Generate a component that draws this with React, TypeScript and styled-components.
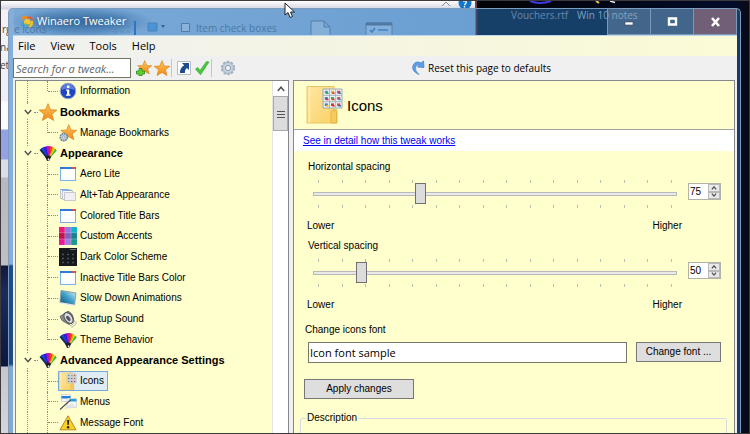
import React, { useState } from "react";
import styled, { createGlobalStyle, css } from "styled-components";

const cream = "#fffecd";
const ui = '"Open Sans", "Noto Sans", sans-serif';
const classic = '"Liberation Sans", Arial, sans-serif';

const GlobalStyle = createGlobalStyle`
  * { box-sizing: border-box; }
  body { margin: 0; background: #020a20; color: #000; font: 10px/14px ${classic}; }
  button, input { font: inherit; color: inherit; }
  button { padding: 0; border: 0; background: none; }
  ul { margin: 0; padding: 0; list-style: none; }
  svg { display: block; flex: none; }
`;

const Screen = styled.div`
  position: relative;
  height: 100vh;
  border: 1px solid #3c3a3c;
  padding: 7px 8px 0 7px;
  overflow: hidden;
`;

/* ---------- desktop behind the window ---------- */
const Desktop = styled.div`
  position: absolute;
  inset: 0;
  display: flex;
  background: linear-gradient(90deg, #020307 65%, #020b29 98%, #0a0a12);
`;
const Explorer = styled.div`
  width: 476px;
  border-right: 2px solid #6e4450;
  background: linear-gradient(#fff 0, #d4d4e2 8px, #f2f2f8 9px, #eeeef6 100px, #fafaff 101px,
    #fafaff 128px, #92a2e4 129px, #92a2e4 158px, #dcdce6 159px, #dcdce6 176px,
    #b7b7bd 177px, #c0c0c4 264px, #10193c 265px, #1c2b5c 290px, #0b1740 365px, #c6c6ca 366px, #d5d5dd);
`;
const Ghost = styled.span<{ $x: number; $y: number; $tone?: string }>`
  position: absolute;
  left: ${(p) => p.$x}px;
  top: ${(p) => p.$y}px;
  color: ${(p) => p.$tone || "#45474f"};
  font: 10px/14px ${ui};
  white-space: nowrap;
`;
const DesktopArt = styled.svg`
  position: absolute;
  left: 430px;
  top: 0;
`;

/* ---------- window ---------- */
const Window = styled.div`
  position: relative;
  display: flex;
  flex-direction: column;
  height: 100%;
  padding: 0 3px 0 4px;
  border: 1px solid #7d9cbb;
  border-bottom: 0;
  border-radius: 5px 5px 0 0;
  overflow: hidden;
  background:
    linear-gradient(#86aedb 0, #86aedb 255px, #1d4f88 257px, #1d4a80 355px, #84a9cf 358px) 0 0 / 5px 100% no-repeat,
    linear-gradient(90deg, #7ba9d6, #6b9fd2 466px, #5b4a66 467px, #174069 469px, #143c66);
`;
const TitleBar = styled.header`
  position: relative;
  display: flex;
  align-items: center;
  flex: none;
  height: 27px;
  padding-left: 7px;
  border-bottom: 1px solid #bcd6ee;
  background: radial-gradient(ellipse 72px 16px at 68px 13px, #2f659cd0, #3f75ab90 60%, transparent);
`;
const TitleArt = styled.svg`
  position: absolute;
  left: 0;
  top: 0;
`;
const Title = styled.h1`
  position: relative;
  flex: 1;
  margin: 0 0 2px 3px;
  color: #fff;
  font: 11px/14px ${ui};
  text-shadow: 0 0 5px #1d4a78;
`;
const Caption = styled.button<{ $close?: boolean }>`
  position: relative;
  display: grid;
  place-items: center;
  width: 44px;
  height: 26px;
  border: 1px solid #7d99b4;
  border-top: 0;
  margin-left: -1px;
  background: ${(p) => (p.$close ? "#715f77" : "#86a4c466")};
`;
const Client = styled.div`
  display: flex;
  flex-direction: column;
  flex: 1;
  min-height: 0;
  background: #f0f0f0;
`;
const MenuBar = styled.nav`
  display: flex;
  gap: 15px;
  flex: none;
  height: 20px;
  padding-left: 5px;
  background: linear-gradient(90deg, #f0f0f0, #f5f5e2 50%, #fbfbd6);
`;
const MenuItem = styled.button`
  font: 11px/20px ${ui};
`;
const Toolbar = styled.div`
  display: flex;
  align-items: center;
  flex: none;
  height: 24px;
`;
const Search = styled.input`
  width: 118px;
  height: 20px;
  padding: 0 2px;
  margin-right: 4px;
  border: 1px solid #6f7760;
  outline: 0;
  background: #fff;
  font: italic 11px/16px ${ui};
  &::placeholder { color: #666; opacity: 1; }
`;
const Tool = styled.button`
  display: grid;
  place-items: center;
  width: 18px;
  height: 20px;
`;
const Separator = styled.span<{ $gap: number }>`
  width: 1px;
  height: 18px;
  margin-right: ${(p) => p.$gap}px;
  background: #c4c4c4;
`;
const Reset = styled.button`
  display: flex;
  align-items: center;
  gap: 3px;
  margin: 0 auto;
  padding-right: 12px;
  font: 10px/20px ${ui};
`;
const Body = styled.div`
  display: flex;
  gap: 4px;
  flex: 1;
  min-height: 0;
  padding: 0 2px;
  background: #f0f0f0;
`;

/* ---------- tree ---------- */
const TreePanel = styled.aside`
  display: flex;
  flex: 0 0 274px;
  border: 1px solid #85878c;
  border-width: 1px 1px 0 1px;
  background: ${cream};
`;
const Tree = styled.ul`
  display: flex;
  flex-direction: column;
  flex: 1;
  min-width: 0;
`;
const Row = styled.li`
  display: flex;
  align-items: center;
  flex: 1 0 20px;
  overflow: hidden;
`;
const Guide = styled.span<{ $width: number; $half?: boolean }>`
  width: ${(p) => p.$width}px;
  height: ${(p) => (p.$half ? "50%" : "100%")};
  align-self: flex-start;
  border-right: 1px dotted #8c8c7c;
`;
const Branch = styled.span<{ $width: number }>`
  width: ${(p) => p.$width}px;
  border-top: 1px dotted #8c8c7c;
`;
const Toggle = styled.button`
  display: grid;
  place-items: center;
  width: 13px;
  height: 14px;
  margin-left: -7px;
  background: ${cream};
`;
const Node = styled.button<{ $group?: boolean; $selected?: boolean }>`
  display: flex;
  align-items: center;
  gap: 3px;
  height: 20px;
  padding-right: 3px;
  border: 1px solid transparent;
  white-space: nowrap;
  ${(p) => p.$group && css`font: bold 11px/14px ${classic};`}
  ${(p) => p.$selected && css`border-color: #7aa7da; background: #dfecf3;`}
`;
const Scrollbar = styled.div`
  width: 16px;
  border-left: 1px solid #e4e4e4;
  background: #fff;
`;
const ScrollUp = styled.button`
  display: grid;
  place-items: center;
  width: 100%;
  height: 15px;
`;
const ScrollThumb = styled.div`
  display: grid;
  place-items: center;
  height: 35px;
  border: 1px solid #a9a9a9;
  background: #dcdcdc;
`;

/* ---------- page ---------- */
const Page = styled.main`
  flex: 1;
  min-width: 0;
  border: 1px solid #85878c;
  border-bottom: 0;
  background: ${cream};
  overflow: hidden;
`;
const PageHead = styled.div`
  display: flex;
  align-items: center;
  gap: 4px;
  height: 49px;
  padding-left: 12px;
  border-bottom: 1px solid #a2a2a2;
`;
const PageTitle = styled.h2`
  margin: 2px 0 0;
  font: 15px/20px ${classic};
`;
const LinkBar = styled.div`
  height: 21px;
  padding: 4px 9px 0;
  background: #fff;
`;
const Link = styled.a`
  color: #0000f0;
`;
const Settings = styled.form`
  padding: 9px 13px 0 13px;
`;
const SliderField = styled.div`
  display: grid;
  grid-template-columns: minmax(0, 1fr) 33px;
  column-gap: 6px;
  height: 79px;
  align-content: start;
`;
const SliderLabel = styled.label`
  grid-column: 1 / -1;
  padding-left: 1px;
`;
const SliderBox = styled.div`
  padding: 6px 5px 11px 6px;
`;
const Ticks = styled.div`
  display: flex;
  justify-content: space-between;
  height: 3px;
  padding: 0 5px;
`;
const Tick = styled.span`
  width: 1px;
  background: #bdbdac;
`;
const Range = styled.input`
  display: block;
  width: 100%;
  height: 22px;
  margin: 0;
  appearance: none;
  background: none;
  &::-webkit-slider-runnable-track {
    height: 4px;
    border: 1px solid #b9b9b9;
    background: #e9e9ea;
  }
  &::-webkit-slider-thumb {
    appearance: none;
    width: 11px;
    height: 21px;
    margin-top: -10px;
    border: 1px solid #707070;
    background: #dcdcdc;
  }
`;
const Ends = styled.div`
  display: flex;
  justify-content: space-between;
`;
const Spinner = styled.div`
  display: grid;
  grid-template: 1fr 1fr / 1fr 12px;
  height: 17px;
  margin-top: 9px;
  border: 1px solid #b2b2a8;
  background: #fff;
`;
const SpinValue = styled.input`
  grid-row: 1 / -1;
  width: 100%;
  min-width: 0;
  padding: 0 1px;
  border: 0;
  outline: 0;
  background: none;
`;
const SpinButton = styled.button`
  display: grid;
  place-items: center;
  border: 1px solid #b9b9b9;
  background: #e9e9e9;
`;
const FontLabel = styled.label`
  display: block;
  margin: 5px 0 5px -2px;
`;
const FontRow = styled.div`
  display: flex;
  gap: 9px;
  padding-left: 1px;
`;
const Sample = styled.input`
  flex: 1;
  min-width: 0;
  height: 21px;
  padding: 0 1px;
  border: 1px solid #77776c;
  outline: 0;
  background: #fff;
  font: 11px/18px ${ui};
`;
const PushButton = styled.button<{ $width: number }>`
  width: ${(p) => p.$width}px;
  height: 20px;
  border: 1px solid #777;
  background: #dedede;
`;
const ApplyRow = styled.div`
  margin: 16px 0 12px -3px;
`;
const Description = styled.fieldset`
  height: 40px;
  margin: 0 -6px 0 -7px;
  padding: 0 5px;
  border: 1px solid #d6dbe6;
  border-radius: 2px;
`;
const Legend = styled.legend`
  padding: 0 1px;
`;

/* ---------- icons ---------- */
const STAR = "M8 .6 10.2 6 15.8 6.3 11.4 9.9 13 15.5 8 12.4 3 15.5 4.6 9.9 .2 6.3 5.8 6Z";

const Star = ({ size = 16, badge }: { size?: number; badge?: "plus" | "gear" }) => (
  <svg width={size} height={size} viewBox="0 0 16 16">
    <defs>
      <linearGradient id="star" x1="0" y1="0" x2="0" y2="1">
        <stop offset="0" stopColor="#ffc65a" />
        <stop offset="1" stopColor="#f08a16" />
      </linearGradient>
    </defs>
    <path d={STAR} fill="url(#star)" stroke="#d98420" strokeWidth=".7" transform={badge ? "translate(1.5 0) scale(.9)" : undefined} />
    {badge === "plus" && <path d="M3 8.5h3v2.5h2.5v3H6v2H3v-2H.5v-3H3Z" fill="#5fd02f" stroke="#238a1c" strokeWidth=".8" />}
    {badge === "gear" && (
      <g>
        <circle cx="4.3" cy="11.7" r="3.2" fill="#c5d3dc" stroke="#71899c" strokeWidth="1.5" strokeDasharray="1.6 .5" />
        <circle cx="4.3" cy="11.7" r="1.1" fill="#fff" stroke="#71899c" strokeWidth=".6" />
      </g>
    )}
  </svg>
);

const InfoIcon = () => (
  <svg width="18" height="18" viewBox="0 0 18 18">
    <circle cx="9" cy="9" r="7.8" fill="#1f45bd" stroke="#9aa9cc" strokeWidth="1" />
    <path d="M2.5 8a6.5 6.5 0 0 1 13 0q-6.5-3-13 0Z" fill="#7695e6" opacity=".7" />
    <circle cx="9.2" cy="4.9" r="1.4" fill="#fff" />
    <path d="M7 7.6h3.3v5h1.2v1.2H6.9v-1.2H8V8.8H7Z" fill="#fff" />
  </svg>
);

const FanIcon = () => (
  <svg width="18" height="18" viewBox="0 0 18 18">
    <path d="M.5 6 3.500 3.500 10 15.500 7 14Z" fill="#0e2f50" />
    <path d="M2 4.500 5.500 2.800 10 15.500Z" fill="#1746d8" />
    <path d="M4.500 3.200 8 2.200 10 15.500Z" fill="#3a14d8" />
    <path d="M7.200 2.300 10 2 10 15.500Z" fill="#a814d0" />
    <path d="M9.500 2 12 2.300 10 15.500Z" fill="#ea1270" />
    <path d="M11.500 2.200 14 3 10 15.500Z" fill="#f23a12" />
    <path d="M13.500 2.900 15.500 4 10 15.500Z" fill="#fa9a00" />
    <path d="M15 3.700 16.700 5 10 15.500Z" fill="#e8e000" />
    <path d="M16.200 4.700 17.700 6.300 10 15.500Z" fill="#26b53a" />
    <path d="M6 12.200 9 11l3.200 1.500-1.700 4-2.500.5Z" fill="#22202c" />
    <path d="M8.500 15.500 9.600 14l1 1.200-.8 1.300Z" fill="#e6e6e6" />
  </svg>
);

const WindowIcon = () => (
  <svg width="18" height="18" viewBox="0 0 18 18">
    <rect x="1.5" y="2.5" width="15" height="13" fill="#fff" stroke="#7daee8" />
    <path d="M1 2h16v2H1Z" fill="#2c79df" />
    <path d="M13 2h3.5v1.8H13Z" fill="#e0523b" />
  </svg>
);
const AltTabIcon = () => (
  <svg width="18" height="18" viewBox="0 0 18 18">
    <path d="M1.5 3.5h10v9h-10Z" fill="#eef2f6" stroke="#b9c5d0" />
    <path d="M3.5 4.5h10v9h-10Z" fill="#f7f7f7" stroke="#c6c6c6" />
    <path d="M5.5 6.5h11v8h-11Z" fill="#f0f0f2" stroke="#c6cad0" />
    <path d="M1 3.5h8M3 4.5h10" stroke="#7fb0e0" />
  </svg>
);
const ACCENTS = ["#f1177b", "#8f7be0", "#0cb4c4", "#c4104e", "#7a64c2", "#12868a", "#e8179c", "#9a7de0", "#159d86"];
const AccentsIcon = () => (
  <svg width="18" height="18" viewBox="0 0 18 18">
    <path d="M0 0h18v18H0Z" fill="#c9c2e0" />
    {ACCENTS.map((color, i) => (
      <rect key={i} x={(i % 3) * 6.1} y={Math.floor(i / 3) * 6.1} width="5.7" height="5.7" fill={color} />
    ))}
  </svg>
);
const DarkIcon = () => (
  <svg width="18" height="18" viewBox="0 0 18 18">
    <path d="M0 0h18v18H0Z" fill="#16181b" />
    <path d="M11 1.5h6" stroke="#777" />
    <path d="M3 6.5h12M3 10.5h12M3 14.5h12" stroke="#46505a" strokeWidth="1.5" strokeDasharray="2 3" />
  </svg>
);
const MonitorIcon = () => (
  <svg width="18" height="18" viewBox="0 0 18 18">
    <defs>
      <linearGradient id="glass" x1="0" y1="1" x2="1" y2="0">
        <stop offset="0" stopColor="#0e4d78" />
        <stop offset=".5" stopColor="#3da0c8" />
        <stop offset="1" stopColor="#d8f2f4" />
      </linearGradient>
    </defs>
    <path d="M2 1.5 17 4 15.5 16 1 13.5Z" fill="url(#glass)" stroke="#8597a2" strokeWidth=".9" />
    <path d="M1.2 13.8 15.5 16.4" stroke="#e5eaec" strokeWidth="1.2" />
  </svg>
);
const SpeakerIcon = () => (
  <svg width="18" height="18" viewBox="0 0 18 18">
    <path d="M1 6.5 9 1.2q6 2.5 5.5 10.5L10 14.5 3 10.5Z" fill="#8a8c90" stroke="#55585e" strokeWidth=".8" />
    <ellipse cx="9.5" cy="8" rx="3.8" ry="6" transform="rotate(-34 9.5 8)" fill="#dedfe2" stroke="#4d5056" />
    <ellipse cx="9.3" cy="8.4" rx="1.7" ry="3" transform="rotate(-34 9.3 8.4)" fill="#54575d" />
    <path d="M11 15.8q4.3-1 4.3-6M12.5 17.3q4.5-1.3 4.5-6" fill="none" stroke="#a3a6a8" strokeWidth=".9" />
  </svg>
);
const MINI = ["#3d9ad0", "#e2b02c", "#d03c2c", "#2f6ec4", "#3ba54e", "#cf4734", "#3480cc", "#d23a2e", "#d6452d"];
const FolderIcon = ({ large }: { large?: boolean }) => (
  <svg width={large ? 37 : 18} height={large ? 40 : 18} viewBox={large ? "0 0 37 40" : "0 0 38 38"}>
    <defs>
      <linearGradient id="folder" x1="0" y1="0" x2="1" y2="1">
        <stop offset="0" stopColor="#ffe7a2" />
        <stop offset="1" stopColor="#fbd064" />
      </linearGradient>
    </defs>
    <path d="M1 1.5h27v23h3V38H1Z" fill="url(#folder)" stroke="#e9c462" />
    <path d="M3.5 2v35.5" stroke="#fff0bd" strokeWidth="1.5" />
    <path d="M25 38V28q1-3 3-3t2.5 2v11Z" fill="#f6cb5e" stroke="#e2b545" />
    <path d="M17 4h19v19H17Z" fill="#eef2f4" stroke="#9ca9b6" />
    <path d="M23.5 4v19M29.7 4v19M17 10.3h19M17 16.7h19" stroke="#9fabb8" strokeWidth=".9" />
    {MINI.map((color, i) => (
      <g key={i}>
        <rect x={18.8 + (i % 3) * 6.2} y={5.8 + Math.floor(i / 3) * 6.3} width="3" height="2.6" fill={color} />
        <rect x={20 + (i % 3) * 6.2} y={7.4 + Math.floor(i / 3) * 6.3} width="2.5" height="1.6" fill={MINI[(i + 4) % 9]} />
      </g>
    ))}
  </svg>
);
const MenusIcon = () => (
  <svg width="18" height="18" viewBox="0 0 18 18">
    <path d="M2.500 1.500h9v7h-9Z" fill="#f4f6f8" stroke="#c2ccd4" strokeWidth=".7" />
    <path d="M2.500 3h9v2.500h-9Z" fill="#2581d5" />
    <path d="M8 5.500h9.500v9H8Z" fill="#f6f6f6" stroke="#c2ccd4" strokeWidth=".7" />
    <path d="M10.500 6h7v2.500h-7Z" fill="#2ba0d8" />
    <path d="M1 16.500 11.500 7" stroke="#4b5258" strokeWidth="1.200" />
    <path d="M4.500 16 12 10l4 2.500-3 2.500Z" fill="#dfe1e2" opacity=".8" />
  </svg>
);
const WarningIcon = () => (
  <svg width="18" height="18" viewBox="0 0 18 18">
    <path d="M9 1.8 17 15.8H1Z" fill="#fbd022" stroke="#b58d24" strokeLinejoin="round" />
    <path d="M8 6h2.2l-.5 5H8.5Z" fill="#222" />
    <circle cx="9.1" cy="13.2" r="1.2" fill="#222" />
  </svg>
);
const ShortcutIcon = () => (
  <svg width="16" height="16" viewBox="0 0 16 16">
    <path d="M1.5 1.5h13v13h-13Z" fill="#fff" stroke="#b9bdc4" />
    <path d="M6 3h7v7l-2.2-2.1Q8.5 9.7 8.8 13H4Q3.6 8.200 8.200 5.300Z" fill="#1d4d8e" />
  </svg>
);
const CheckIcon = () => (
  <svg width="16" height="16" viewBox="0 0 16 16">
    <path d="M1.500 9 3.800 7.500 6 10.500 12.500 1.500 15 2 6.500 14.800Z" fill="#4bc83c" stroke="#2fa52a" strokeWidth=".6" />
  </svg>
);
const GearIcon = () => (
  <svg width="16" height="16" viewBox="0 0 16 16">
    <circle cx="8" cy="8" r="6.300" fill="none" stroke="#9fb0be" strokeWidth="1.700" strokeDasharray="2.500 1.450" />
    <circle cx="8" cy="8" r="5.500" fill="#c6d2dc" stroke="#93a6b5" strokeWidth=".8" />
    <circle cx="8" cy="8" r="2.600" fill="#f0f0f0" stroke="#8b9fb0" />
  </svg>
);
const ResetIcon = () => (
  <svg width="14" height="16" viewBox="0 0 14 16">
    <path d="M8 14.500Q0 11 2 5.500 4.500 0 10 3L12.500 1 13 7.500 6.500 7 8.500 5Q5.500 4 4.500 7 3.500 11 8 14.500Z" fill="#5f9fe6" stroke="#3c7cc8" strokeWidth=".7" />
  </svg>
);
const LogoIcon = () => (
  <svg width="14" height="14" viewBox="0 0 14 14">
    <path d="M6.500 1Q.5 0 1 6 3 2.800 7.500 4Z" fill="#e88e22" />
    <path d="M7 2q6-2 6 4-1-3-4.500-2.500Z" fill="#ee5c24" />
    <path d="M13 6q1 7-6 7 4-2 3.500-7Z" fill="#f6c126" />
    <path d="M1 7q0 6 6 6-3-2-2.500-5Z" fill="#3e9fe0" />
    <circle cx="7.300" cy="7.300" r="3.200" fill="#f8c929" />
    <path d="M5 8.500q2 2.500 4.500.8" stroke="#58b26b" strokeWidth="1.300" fill="none" />
  </svg>
);
const Chevron = ({ up, small }: { up?: boolean; small?: boolean }) => (
  <svg width={small ? 6 : 8} height={small ? 4 : 6} viewBox="0 0 8 6">
    <path d={up ? "M.8 5 4 1.200 7.200 5" : "M.8 1 4 4.600 7.200 1"} fill="none" stroke="#4d4d4d" strokeWidth={small ? 1.8 : 1.400} />
  </svg>
);

/* ---------- data ---------- */
type Entry = { label: string; icon: React.ReactNode; group?: boolean; last?: boolean };
const entries: Entry[] = [
  { label: "Information", icon: <InfoIcon />, last: true },
  { label: "Bookmarks", icon: <Star size={18} />, group: true },
  { label: "Manage Bookmarks", icon: <Star size={18} badge="gear" />, last: true },
  { label: "Appearance", icon: <FanIcon />, group: true },
  { label: "Aero Lite", icon: <WindowIcon /> },
  { label: "Alt+Tab Appearance", icon: <AltTabIcon /> },
  { label: "Colored Title Bars", icon: <WindowIcon /> },
  { label: "Custom Accents", icon: <AccentsIcon /> },
  { label: "Dark Color Scheme", icon: <DarkIcon /> },
  { label: "Inactive Title Bars Color", icon: <WindowIcon /> },
  { label: "Slow Down Animations", icon: <MonitorIcon /> },
  { label: "Startup Sound", icon: <SpeakerIcon /> },
  { label: "Theme Behavior", icon: <FanIcon />, last: true },
  { label: "Advanced Appearance Settings", icon: <FanIcon />, group: true },
  { label: "Icons", icon: <FolderIcon /> },
  { label: "Menus", icon: <MenusIcon /> },
  { label: "Message Font", icon: <WarningIcon /> },
];
const MIN = 32;
const MAX = 182;
const marks = Array.from({ length: 16 }, (_, i) => i);

const TickRow = () => (
  <Ticks aria-hidden>{marks.map((i) => <Tick key={i} />)}</Ticks>
);

function Spacing({ id, label, initial }: { id: string; label: string; initial: number }) {
  const [value, setValue] = useState(initial);
  const change = (next: number) => setValue(Math.min(MAX, Math.max(MIN, next || MIN)));
  return (
    <SliderField>
      <SliderLabel htmlFor={id}>{label}</SliderLabel>
      <SliderBox>
        <TickRow />
        <Range id={id} type="range" min={MIN} max={MAX} value={value} onChange={(e) => change(+e.target.value)} />
        <TickRow />
      </SliderBox>
      <Spinner>
        <SpinValue aria-label={`${label} value`} value={value} onChange={(e) => change(+e.target.value)} />
        <SpinButton type="button" aria-label="Increase" onClick={() => change(value + 1)}><Chevron up small /></SpinButton>
        <SpinButton type="button" aria-label="Decrease" onClick={() => change(value - 1)}><Chevron small /></SpinButton>
      </Spinner>
      <Ends><span>Lower</span><span>Higher</span></Ends>
    </SliderField>
  );
}

export default function App() {
  const [selected, setSelected] = useState("Icons");
  return (
    <Screen>
      <GlobalStyle />
      <Desktop aria-hidden>
        <Explorer />
        <Ghost $x={1} $y={21}>rg</Ghost>
        <Ghost $x={-1} $y={39}>na</Ghost>
        <Ghost $x={-1} $y={57}>eta</Ghost>
        <DesktopArt width="200" height="10" viewBox="0 0 200 10">
          <path d="m11 5 4-4 4 4" fill="none" stroke="#888" />
          <circle cx="34" cy="2" r="6.500" fill="#1275c9" />
          <path d="M32 0q4-1 3 2l-1.500 2M33.500 5v1.500" stroke="#fff" strokeWidth="1.300" fill="none" />
          <path d="M99 0q10 4 21 0" stroke="#403ce8" strokeWidth="2" fill="none" />
          <path d="m165 0 3 2" stroke="#e9cf4d" strokeWidth="2" />
          <path d="m179 0 5 1.500" stroke="#eee" strokeWidth="1.500" />
        </DesktopArt>
      </Desktop>
      <Window>
        <TitleBar>
          <TitleArt aria-hidden width="500" height="26" viewBox="0 0 500 26">
            <path d="M122 12v14" stroke="#2f74c0" strokeWidth="2" />
            <path d="M101 13h16M101 18h16M101 23h16" stroke="#5c8bbb" strokeDasharray="4 2" />
            <path d="M135 14h9v8h-9Z" fill="#4c94d8" stroke="#4782ba" />
            <path d="m148 16 4 0-2 3Z" fill="#37618d" />
            <path d="M168.500 14.500h8v8h-8Z" fill="#8ab3dc" stroke="#4f7ca9" />
            <path d="M298 26V12h13l6 6v8M311 12v6h6M353 26V14h26v12" fill="#84afd9" stroke="#5580ad" />
            <path d="M353 15h26" stroke="#4f79a5" strokeWidth="3" />
            <path d="m357 21 2 2 3-4M365 21h10" fill="none" stroke="#3d83c4" strokeWidth="1.500" />
          </TitleArt>
          <Ghost aria-hidden $x={1} $y={13} $tone="#4b78a8">e icons</Ghost>
          <Ghost aria-hidden $x={183} $y={12} $tone="#4b78a5">Item check boxes</Ghost>
          <Ghost aria-hidden $x={498} $y={-1} $tone="#6689ad">Vouchers.rtf</Ghost>
          <Ghost aria-hidden $x={564} $y={-1} $tone="#7fa0c2">Win 10 notes</Ghost>
          <LogoIcon />
          <Title>Winaero Tweaker</Title>
          <Caption aria-label="Minimize">
            <svg width="10" height="10" viewBox="0 0 10 10"><path d="M1 5h8v3H1Z" fill="#fff" stroke="#3a4a5c" strokeWidth=".6" /></svg>
          </Caption>
          <Caption aria-label="Maximize">
            <svg width="11" height="9" viewBox="0 0 11 9"><path d="M2 1.500h7v6H2Z" fill="none" stroke="#fff" strokeWidth="2.400" /></svg>
          </Caption>
          <Caption aria-label="Close" $close>
            <svg width="11" height="10" viewBox="0 0 11 10"><path d="m2 1 7 8M9 1 2 9" stroke="#fff" strokeWidth="2.600" /></svg>
          </Caption>
        </TitleBar>
        <Client>
          <MenuBar aria-label="Main menu">
            {["File", "View", "Tools", "Help"].map((item) => <MenuItem key={item}>{item}</MenuItem>)}
          </MenuBar>
          <Toolbar>
            <Search aria-label="Search for a tweak" placeholder="Search for a tweak..." />
            <Tool aria-label="Add bookmark"><Star badge="plus" /></Tool>
            <Tool aria-label="Bookmarks"><Star /></Tool>
            <Separator $gap={3} />
            <Tool aria-label="Open shortcut"><ShortcutIcon /></Tool>
            <Tool aria-label="Apply"><CheckIcon /></Tool>
            <Separator $gap={7} />
            <Tool aria-label="Options"><GearIcon /></Tool>
            <Reset><ResetIcon />Reset this page to defaults</Reset>
          </Toolbar>
          <Body>
            <TreePanel>
              <Tree>
                {entries.map((entry) => (
                  <Row key={entry.label}>
                    <Guide $width={12} />
                    {entry.group ? (
                      <>
                        <Toggle aria-label={`Collapse ${entry.label}`}><Chevron /></Toggle>
                        <Branch $width={4} />
                      </>
                    ) : (
                      <>
                        <Guide $width={20} $half={entry.last} />
                        <Branch $width={10} />
                      </>
                    )}
                    <Node $group={entry.group} $selected={entry.label === selected} onClick={() => setSelected(entry.label)}>
                      {entry.icon}
                      {entry.label}
                    </Node>
                  </Row>
                ))}
              </Tree>
              <Scrollbar>
                <ScrollUp aria-label="Scroll up"><Chevron up /></ScrollUp>
                <ScrollThumb>
                  <svg width="8" height="8" viewBox="0 0 8 8"><path d="M0 1.500h8M0 4.500h8M0 7.500h8" stroke="#555" /></svg>
                </ScrollThumb>
              </Scrollbar>
            </TreePanel>
            <Page>
              <PageHead>
                <FolderIcon large />
                <PageTitle>Icons</PageTitle>
              </PageHead>
              <LinkBar><Link href="#details">See in detail how this tweak works</Link></LinkBar>
              <Settings onSubmit={(e) => e.preventDefault()}>
                <Spacing id="horizontal" label="Horizontal spacing" initial={75} />
                <Spacing id="vertical" label="Vertical spacing" initial={50} />
                <FontLabel htmlFor="sample">Change icons font</FontLabel>
                <FontRow>
                  <Sample id="sample" defaultValue="Icon font sample" />
                  <PushButton type="button" $width={85}>Change font ...</PushButton>
                </FontRow>
                <ApplyRow><PushButton type="submit" $width={110}>Apply changes</PushButton></ApplyRow>
                <Description><Legend>Description</Legend></Description>
              </Settings>
            </Page>
          </Body>
        </Client>
      </Window>
      <Cursor aria-hidden width="12" height="17" viewBox="0 0 12 17">
        <path d="M1 1v12l3-2.500 2 5 2.500-1-2-4.500h4Z" fill="#fff" stroke="#222" />
      </Cursor>
    </Screen>
  );
}

const Cursor = styled.svg`
  position: absolute;
  left: 283px;
  top: 1px;
`;
